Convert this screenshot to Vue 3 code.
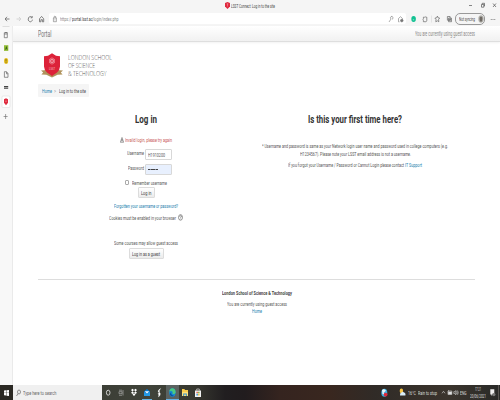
<script setup>
import { h, onMounted, ref } from 'vue'

// A single line of text condensed or expanded to a given width.
const Fit = {
  props: { w: Number, size: { type: Number, default: 6.1 }, tall: { type: Number, default: 8 } },
  setup(props, { slots }) {
    const line = ref(null)
    const scale = ref(1)
    onMounted(() => {
      scale.value = props.w / line.value.getBoundingClientRect().width
    })
    return () => h('span', {
      class: 'fit',
      style: { width: props.w + 'px', height: props.tall + 'px', fontSize: props.size + 'px', lineHeight: props.tall + 'px' }
    }, [
      h('span', { ref: line, class: 'fit-line', style: { transform: `scaleX(${scale.value})` } }, slots.default())
    ])
  }
}
</script>

<template>
  <div class="window">
    <header class="titlebar">
      <div class="tab-title">
        <svg class="crest-small" width="5" height="7" viewBox="0 0 5 7"><path d="M0 1L2.5 0 5 1V4.5L2.5 7 0 4.5Z" fill="#e02b40" /><path d="M1.7 2h1.6M2.5 1.5v3" stroke="#f5a3ac" stroke-width=".5" /></svg>
        <Fit :w="44" :size="5.8" class="ink">LSST Connect: Log in to the site</Fit>
      </div>
      <svg class="controls" width="28" height="6" viewBox="0 0 28 6" fill="none" stroke="#555" stroke-width=".7"><path d="M0 3.5h3M24 1.5l3 3.5M27 1.5l-3 3.5" /><path d="M12.5 2.5h2.3v2.7h-2.3zM13.2 2.3v-1h2.3v2.7h-.6" /></svg>
    </header>

    <div class="toolbar">
      <svg class="nav" width="49" height="12" viewBox="0 0 49 12" fill="none" stroke="#666" stroke-width=".8">
        <path d="M9.5 6H5.2M7 3.8L5.1 6 7 8.2" />
        <path d="M16.5 6h4M19 4l1.8 2L19 8" stroke="#ccc" />
        <path d="M31.8 4.3A2.1 2.6 0 1 0 32.4 6.7M32.2 3v1.8h-1.5" />
        <path d="M39.5 5.8l2.1-2.4 2.1 2.4v3h-1.3V6.7h-1.5v2.1h-1.4z" />
      </svg>
      <div class="address">
        <svg width="11" height="12" viewBox="0 0 11 12" fill="none" stroke="#777" stroke-width=".6"><path d="M4.4 5h3v3.7h-3zM5 5V3.7q.9-1.1 1.8 0V5M5.9 6.4v1" /></svg>
        <Fit :w="11.5" :size="6" class="url">https://</Fit>
        <Fit :w="20.5" :size="6" class="host">portal.lsst.ac</Fit>
        <Fit :w="26.5" :size="6" class="url">/login/index.php</Fit>
        <svg class="address-end" width="20" height="12" viewBox="0 0 20 12" fill="none" stroke="#777" stroke-width=".6"><path d="M3 9l2-3M5 6a1.2 1.5 0 1 1 1 .3" /><path d="M13.5 8.8h-1V5.5l2-1.8 2 1.8v1" /><circle cx="15.8" cy="7.6" r="1.3" fill="#777" /></svg>
      </div>
      <svg class="extensions" width="49" height="12" viewBox="0 0 49 12" fill="none" stroke="#666" stroke-width=".7">
        <ellipse cx="7.6" cy="6" rx="2.3" ry="3" fill="#12c192" stroke="none" /><path d="M6.8 6.8h1.4" stroke="#bff1e2" />
        <path d="M17.4 4.2h1.2q.6-1 1.2 0h1v3.2q-.2 1.3-1 1.3h-2.4v-1.2q-.8-.9 0-1.7z" />
        <path d="M25.5 2.5v7" stroke="#ddd" />
        <path d="M31.4 3.1l.7 1.7 1.6.3-1.1 1.3.2 2.4-1.4-1-1.6 1 .2-2.4-1.1-1.3 1.7-.3z" />
        <path d="M41.4 3.5h2.7v3.7h-2.7zM42.5 5.1h3v3.6h-3zM44 5.8v2.1M43.1 6.8h1.8" />
      </svg>
      <div class="profile">
        <Fit :w="16" :size="5.8" class="ink">Not syncing</Fit>
        <svg width="6" height="8" viewBox="0 0 6 8"><ellipse cx="3" cy="4" rx="2.7" ry="3.7" fill="#b5b4af" /><path d="M1.5 3.8q0-2.5 1.5-2.4 1.6 0 1.5 2.4l-.5 2.7h-2z" fill="#706b65" /></svg>
      </div>
      <svg class="more" width="6" height="3" viewBox="0 0 6 3" fill="#666"><circle cx="1.2" cy="1.5" r=".5" /><circle cx="3" cy="1.5" r=".5" /><circle cx="4.8" cy="1.5" r=".5" /></svg>
    </div>

    <div class="body">
      <nav class="tabs">
        <svg width="12" height="96" viewBox="0 0 12 96" fill="none">
          <path d="M2.5 .5h7" stroke="#ccc" stroke-width=".6" />
          <path d="M4.3 6.7h3v5h-3zM5 6.5h2.3M4.3 8h3" stroke="#666" stroke-width=".7" />
          <path d="M4 19.2h4.3v5.7H4z" fill="#91bb37" /><path d="M5 24l.8-2.4.5-1.5.8 1.5.4 2.4-1-.9z" fill="#3d6818" />
          <ellipse cx="6.1" cy="35" rx="2.1" ry="2.9" fill="#e6bf20" /><path d="M6 33v2.5M6 36.2v.8" stroke="#6d5b0b" stroke-width=".8" />
          <path d="M4.4 45.7h2.2l1.4 1.8v3.8H4.4zM6.5 46v1.8H8" stroke="#666" stroke-width=".7" />
          <path d="M4 60h4.2v1.4H4zM4 62.2h4.2v.9H4z" fill="#444" />
          <rect x="2" y="70" width="8" height="11.5" rx="1" fill="#fff" stroke="#ddd" stroke-width=".6" />
          <path d="M4 73.2l2-1 2 1v3.5l-2 2.5-2-2.5z" fill="#df2b3f" /><path d="M5.2 75.2h1.6" stroke="#fbb" stroke-width=".6" />
          <path d="M3.6 90.5h4M5.6 88v5" stroke="#777" stroke-width=".7" />
        </svg>
      </nav>

      <main class="page">
        <div class="navbar">
          <Fit :w="13.5" :size="8.2" :tall="10" class="brand">Portal</Fit>
          <Fit :w="60" :size="6.4" class="guest">You are currently using guest access</Fit>
        </div>

        <div class="logo">
          <svg width="22" height="25" viewBox="0 0 22 25">
            <path d="M0 17.5l6-.5 5 4.5 5-4.5 6 .5-2.2 2 1.8 2-5 .3-5.6 2.7-5.6-2.7-5-.3 1.8-2z" fill="#b0935c" />
            <path d="M3 3.3L7 2.8 11 .2l4 2.6 4 .5v10.2q-.2 3.6-3 6L11 23l-5-3.5q-2.8-2.4-3-6z" fill="#dc2239" />
            <g fill="none" stroke="#f6aab3" stroke-width=".6"><ellipse cx="11" cy="8" rx="1.1" ry="3.4" /><ellipse cx="11" cy="8" rx="3" ry="1.3" transform="rotate(32 11 8)" /><ellipse cx="11" cy="8" rx="3" ry="1.3" transform="rotate(-32 11 8)" /></g>
            <text x="8" y="17" font-size="4" textLength="6" lengthAdjust="spacingAndGlyphs" fill="#f8c6cc">LSST</text>
          </svg>
          <div class="logo-name">
            <Fit :w="44" :size="7.5">LONDON SCHOOL</Fit>
            <Fit :w="27" :size="7.5">OF SCIENCE</Fit>
            <Fit :w="38.5" :size="7.5">&amp; TECHNOLOGY</Fit>
          </div>
        </div>

        <div class="breadcrumb">
          <Fit :w="10" class="link">Home</Fit>
          <Fit :w="2" :size="5" class="sep">&gt;</Fit>
          <Fit :w="27" class="ink">Log in to the site</Fit>
        </div>

        <div class="columns">
          <section class="login">
            <Fit :w="22" :size="10.7" :tall="12" class="heading">Log in</Fit>
            <div class="error">
              <svg width="4" height="6" viewBox="0 0 4 6"><path d="M2 .4L3.7 5.3H.3z" fill="#ddd" stroke="#777" stroke-width=".6" /><path d="M2 2v2" stroke="#555" stroke-width=".6" /></svg>
              <Fit :w="47">Invalid login, please try again</Fit>
            </div>
            <div class="field">
              <Fit :w="17">Username</Fit>
              <div class="input"><Fit :w="17" :size="6">H1910200</Fit></div>
            </div>
            <div class="field second">
              <Fit :w="16">Password</Fit>
              <div class="input filled"><span class="dots"></span></div>
            </div>
            <div class="remember"><span class="check"></span><Fit :w="35">Remember username</Fit></div>
            <div class="button"><Fit :w="10.5" class="ink">Log in</Fit></div>
            <Fit :w="64" class="link forgot">Forgotten your username or password?</Fit>
            <div class="cookies">
              <Fit :w="67">Cookies must be enabled in your browser</Fit>
              <svg width="5" height="7" viewBox="0 0 5 7" fill="none" stroke="#555" stroke-width=".6"><ellipse cx="2.5" cy="3.4" rx="2" ry="2.8" /><path d="M1.7 2.7q.1-1 .9-1 .9.1.8 1-.8.7-.8 1.3M2.5 4.6v.6" /></svg>
            </div>
            <Fit :w="64" class="courses">Some courses may allow guest access</Fit>
            <div class="button wide"><Fit :w="28" class="ink">Log in as a guest</Fit></div>
          </section>

          <section class="intro">
            <Fit :w="94" :size="10.7" :tall="12" class="heading">Is this your first time here?</Fit>
            <Fit :w="186" class="first">* Username and password is same as your Network login user name and password used in college computers (e.g.</Fit>
            <Fit :w="111">H1234567). Please note your LSST email address is not a username.</Fit>
            <div class="last">
              <Fit :w="116">If you forgot your Username / Password or Cannot Login please contact</Fit>
              <Fit :w="17" class="link">IT Support</Fit>
            </div>
          </section>
        </div>

        <footer class="footer">
          <Fit :w="70" class="bold">London School of Science &amp; Technology</Fit>
          <Fit :w="60" class="status">You are currently using guest access</Fit>
          <Fit :w="10" class="link">Home</Fit>
        </footer>
      </main>
    </div>

    <div class="taskbar">
      <div class="start"><svg width="5" height="6" viewBox="0 0 5 6" fill="#fff"><path d="M0 .5l2.1-.3v2.5H0zM2.5.2L5 0v2.7H2.5zM0 3.1h2.1v2.5L0 5.3zM2.5 3.1H5V6l-2.5-.3z" /></svg></div>
      <div class="search">
        <svg width="5" height="8" viewBox="0 0 5 8" fill="none" stroke="#555" stroke-width=".6"><ellipse cx="3" cy="3" rx="1.5" ry="2" /><path d="M2 4.6L.5 7" /></svg>
        <Fit :w="33.5">Type here to search</Fit>
      </div>
      <svg class="apps" width="104" height="15" viewBox="0 0 104 15" fill="none">
        <rect x="64" width="13" height="15" fill="#5b6260" />
        <ellipse cx="6.2" cy="7.7" rx="1.8" ry="2.5" stroke="#eee" stroke-width=".8" />
        <path d="M17 5.2h3M17 10.3h3M17 6.7h3v2h-3zM21 5v5.5" stroke="#bbb" stroke-width=".6" />
        <path d="M29 5l1.5-1.2L32 5l-1.5 1.4zM32 5l1.5-1.2L35 5l-1.5 1.4zM29 7.7l1.5-1.3L32 7.7 30.5 9zM32 7.7l1.5-1.3L35 7.7 33.5 9zM30.5 9.5L32 8.3l1.5 1.2L32 11z" fill="#fff" />
        <path d="M42 6.5L45 4l3 2.5V11h-6z" fill="#0877ce" /><path d="M42.7 6.2h4.6L45 8.7z" fill="#e8f5ff" /><path d="M42 7l3 2.2L48 7v4h-6z" fill="#239be9" />
        <path d="M58.7 3.5Q55.6 5 56.2 7l2 1.1q.8 1.8-1.7 4 .7-2.4-.3-3.6l1.2-1.2q-.5-2.3 1.3-3.8z" fill="#fff" stroke="#fff" stroke-width=".3" />
        <ellipse cx="70.4" cy="7.5" rx="3.2" ry="4.2" fill="#168bd3" /><path d="M67.2 6.8q.5-3.7 3.4-3.6 3.1.4 3 4.5-.8 1.8-3 1.2.8-2.6-1-3-1.3-.2-2.4.9z" fill="#4acb82" /><path d="M69.2 6.8q-.7 3.3 2.7 4-3 1.6-4.2-1.5z" fill="#0b519d" />
        <path d="M80 4h2.4l.6 1h3v6h-6z" fill="#f8cc4b" /><path d="M80 7h6v4h-6z" fill="#ffe078" /><path d="M81.2 8.5h3.6V11h-.9V9.4h-1.8V11h-.9z" fill="#2a8dd0" />
        <path d="M93 5.5h6V12h-6z" fill="#f2f2f2" /><path d="M94.7 5.5V4h2.6v1.5" stroke="#eee" stroke-width=".6" /><path d="M94.5 6.7h1.3v1.6h-1.3z" fill="#e84a30" /><path d="M96.2 6.7h1.3v1.6h-1.3z" fill="#72a927" /><path d="M94.5 8.8h1.3v1.6h-1.3z" fill="#218bd0" /><path d="M96.2 8.8h1.3v1.6h-1.3z" fill="#f0b521" />
        <path d="M40 14.5h10M64 14.5h13" stroke="#65b2e6" />
      </svg>
      <div class="tray">
        <svg width="28" height="15" viewBox="0 0 28 15"><ellipse cx="4.3" cy="7.7" rx="3" ry="4" fill="#3faee0" /><path d="M2 5l2-1 2 1.7-2.3 2 1 2L2.5 9z" fill="#e9f5f8" /><circle cx="5.6" cy="9.6" r="1.9" fill="#dd293b" /><ellipse cx="21.4" cy="6" rx="1.7" ry="2.4" fill="#f9c646" /><path d="M20 10.5q-.4-2.6 1.5-3 1.5-1.6 2.4-.1 2 .3 1.5 3.1z" fill="#d9edfa" /></svg>
        <Fit :w="8" :size="5.8">16°C</Fit>
        <Fit :w="19" :size="5.8" class="weather">Rain to stop</Fit>
        <svg width="23" height="15" viewBox="0 0 23 15" fill="none" stroke="#ddd" stroke-width=".6"><path d="M5 8.3l1.5-2L8 8.3M11 6h3.8v3.5H11zM11.5 5.3v1M16.8 6.7h1l1-1.2v4.3l-1-1.2h-1zM19.7 6.3q.8 1.4 0 2.8M20.6 5.5q1.2 2.1 0 4.3" /><path d="M11.5 7h3v2h-3z" fill="#ddd" /></svg>
        <Fit :w="6.5" :size="5.7">ENG</Fit>
        <div class="clock"><Fit :w="6" :size="5.4" :tall="7">17:21</Fit><Fit :w="16" :size="5.4" :tall="7">20/06/2021</Fit></div>
        <svg width="11" height="15" viewBox="0 0 11 15"><path d="M1.3 4.2h4v5.3H3.6L2.5 11V9.5H1.3z" fill="#eee" /><circle cx="4.8" cy="9.6" r="1.7" fill="#777" /><path d="M9.5 0v15" stroke="#77716b" stroke-width=".6" /></svg>
      </div>
    </div>
  </div>
</template>

<style>
body { margin: 0; overflow: hidden; }
.fit { display: block; flex: none; }
.fit-line { display: inline-block; vertical-align: top; white-space: nowrap; transform-origin: 0 0; }
</style>

<style scoped>
.window { width: 500px; height: 400px; display: flex; flex-direction: column; background: #fff; font-family: Roboto, "Liberation Sans", sans-serif; color: #585858; overflow: hidden; }
svg { display: block; flex: none; }
.ink { color: #484848; }
.link { color: #2380ad; }
.titlebar { height: 13px; flex: none; background: #f5f5f5; display: flex; align-items: flex-start; justify-content: flex-end; }
.tab-title { display: flex; gap: 1.5px; padding-top: 2.3px; margin-right: 194px; }
.controls { margin: 2px 3px 0 0; }
.toolbar { height: 13px; flex: none; background: #f5f5f5; display: flex; align-items: flex-start; }
.address { width: 357px; height: 11px; background: #fff; border-radius: 2px; display: flex; align-items: flex-start; }
.address .fit { margin-top: 2px; }
.address-end { margin-left: auto; }
.url { color: #888; }
.host { color: #3a3a3a; }
.profile { width: 30px; height: 12px; box-sizing: border-box; border: 1px solid #999; border-radius: 5px; display: flex; align-items: center; justify-content: space-between; padding: 0 0 0 3px; }
.more { margin: 4.5px 0 0 5px; }
.body { flex: 1; display: flex; min-height: 0; }
.tabs { width: 12px; flex: none; background: #f8f8f8; border-right: 1px solid #eaeaea; }
.page { flex: 1; display: flex; flex-direction: column; align-items: flex-start; }
.navbar { align-self: stretch; height: 15px; flex: none; display: flex; justify-content: space-between; padding: 0 25px; border-bottom: 1px solid #dedede; background: linear-gradient(#fff, #f1f1f1); box-shadow: 0 1px 2px #f2f2f2; }
.brand { margin-top: 3px; color: #777; }
.guest { margin-top: 4px; color: #888; }
.logo { display: flex; margin: 11px 0 0 28px; gap: 5px; }
.logo-name { display: flex; flex-direction: column; color: #555; font-family: "Open Sans", sans-serif; font-weight: 300; }
.breadcrumb { margin: 6px 0 0 25px; width: 51px; height: 13px; box-sizing: border-box; background: #f5f5f5; border-radius: 1px; display: flex; padding: 3px 3.5px; gap: 2.7px; }
.sep { color: #999; }
.columns { margin: 17px 0 0 25px; display: grid; grid-template-columns: 216px 202px; height: 145px; }
.login, .intro { display: flex; flex-direction: column; align-items: center; }
.heading { color: #333; font-weight: 700; }
.error { display: flex; gap: 1px; margin-top: 10px; color: #c85855; }
.error > svg:first-child { margin-top: 1px; }
.field { width: 52px; margin-top: 5px; display: flex; justify-content: flex-end; gap: 1px; }
.field.second { margin-top: 4px; }
.input { width: 27px; height: 11px; box-sizing: border-box; border: 1px solid #d8d8d8; border-radius: 1px; padding: 1px 2px; background: #fff; }
.input.filled { background: #e8f0fe; padding-top: 4px; }
.dots { display: block; width: 10px; height: 1.4px; background: repeating-linear-gradient(90deg, #444 0 1px, #8890a0 1px 1.3px); }
.remember { display: flex; gap: 3px; margin-top: 4px; }
.check { width: 4px; height: 5px; box-sizing: border-box; border: 1px solid #aaa; border-radius: 1px; margin-top: 1px; }
.button { width: 17px; height: 11px; box-sizing: border-box; border: 1px solid #dcdcdc; border-radius: 1px; background: linear-gradient(#fff, #ebebeb); display: flex; justify-content: center; padding-top: 1px; }
.button.wide { width: 35px; margin-top: 1.5px; }
.forgot { margin-top: 3.5px; }
.cookies { display: flex; gap: 2px; margin-top: 4.5px; }
.courses { margin-top: 16.5px; }
.first { margin-top: 15.5px; }
.last { margin-top: 3px; display: flex; gap: 1.3px; }
.footer { margin: 20px 0 0 25px; width: 437px; border-top: 1px solid #ddd; display: flex; flex-direction: column; align-items: center; padding-top: 9px; }
.bold { font-weight: 700; color: #444; }
.status { margin-top: 3px; }
.footer .link { margin-top: -1px; }
.taskbar { height: 15px; flex: none; display: flex; background: linear-gradient(90deg, #34362e 0, #40433a 30%, #373830 39%, #211e20 45%, #211c1e 49%, #35241f 56%, #39271f 66%, #302b27 75%, #3b342d 90%, #292a28 100%); }
.start { width: 13px; display: flex; justify-content: center; align-items: center; background: #2b2924; }
.search { width: 89px; background: #f0f0f0; display: flex; gap: 2px; padding: 4px 0 0 3px; box-sizing: border-box; color: #666; }
.tray { margin-left: auto; display: flex; color: #ddd; }
.tray > .fit { margin-top: 4px; }
.weather { margin-left: 2px; }
.clock { width: 23px; display: flex; flex-direction: column; align-items: center; padding-top: 1px; }
</style>
